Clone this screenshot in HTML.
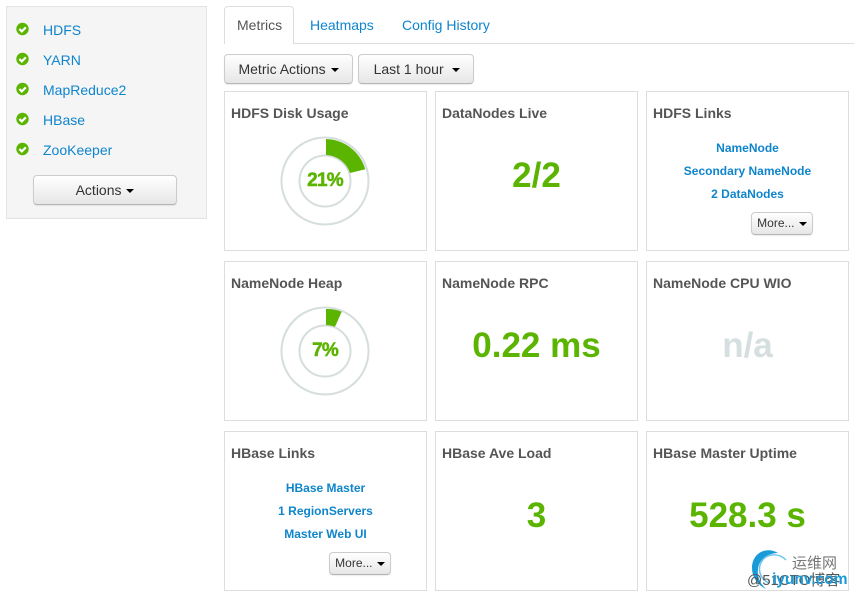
<!DOCTYPE html>
<html><head><meta charset="utf-8">
<style>
html,body{margin:0;padding:0;background:#fff}
body{width:854px;height:597px;overflow:hidden;position:relative;font-family:"Liberation Sans","Noto Sans CJK SC",sans-serif;font-size:14px;color:#333}
.a{position:absolute;white-space:nowrap}
#side{left:6px;top:6px;width:199px;height:211px;background:#f5f5f5;border:1px solid #e3e3e3}
.svc{color:#0f85cc;font-size:14px;left:43px;line-height:20px}
.btn{position:absolute;box-sizing:border-box;border:1px solid #ccc;border-radius:4px;background:linear-gradient(#fff,#e6e6e6);color:#333;font-size:14px;line-height:28px;text-align:center;white-space:nowrap;box-shadow:0 1px 1px rgba(0,0,0,.08);border-bottom-color:#b5b5b5}
.c{display:inline-block;width:0;height:0;border-left:4px solid transparent;border-right:4px solid transparent;border-top:4px solid #000;vertical-align:middle;margin-left:1px}
.card{position:absolute;box-sizing:border-box;width:203px;height:160px;border:1px solid #ddd;background:#fff}
.t{position:absolute;left:6px;top:13px;font-weight:bold;font-size:14px;color:#555;white-space:nowrap}
.v{position:absolute;left:0;right:0;top:62px;text-align:center;font-weight:bold;font-size:35px;line-height:44px;color:#5ab400}
.l{position:absolute;left:0;right:0;text-align:center;font-weight:bold;font-size:12px;line-height:16px;color:#0f85cc;white-space:nowrap}
.m{position:absolute;width:62px;height:23px;left:calc(100% - 97px);top:120px;font-size:12px;line-height:20px;box-sizing:border-box}
.tab{font-size:14px;line-height:20px;color:#0f85cc}
.p{font-family:"Liberation Sans",sans-serif;font-weight:bold;font-size:19px;letter-spacing:-.8px;fill:#5ab400;stroke:#5ab400;stroke-width:.5px}
.r{fill:#fff;stroke:#d5dddd;stroke-width:2px}
</style></head><body>
<div class="a" id="side"></div>
<svg class="a" style="left:16px;top:22px" width="14" height="134" viewBox="0 0 14 134">
<g><circle cx="6.5" cy="7" r="6.2" fill="#5ab400"/><path d="M3.4 7l2.400 2.400 4-4" fill="none" stroke="#fff" stroke-width="2.200"/></g>
<g transform="translate(0,30)"><circle cx="6.5" cy="7" r="6.2" fill="#5ab400"/><path d="M3.4 7l2.400 2.400 4-4" fill="none" stroke="#fff" stroke-width="2.200"/></g>
<g transform="translate(0,60)"><circle cx="6.5" cy="7" r="6.2" fill="#5ab400"/><path d="M3.4 7l2.400 2.400 4-4" fill="none" stroke="#fff" stroke-width="2.200"/></g>
<g transform="translate(0,90)"><circle cx="6.5" cy="7" r="6.2" fill="#5ab400"/><path d="M3.4 7l2.400 2.400 4-4" fill="none" stroke="#fff" stroke-width="2.200"/></g>
<g transform="translate(0,120)"><circle cx="6.5" cy="7" r="6.2" fill="#5ab400"/><path d="M3.4 7l2.400 2.400 4-4" fill="none" stroke="#fff" stroke-width="2.200"/></g>
</svg>
<div class="a svc" style="top:20px">HDFS</div>
<div class="a svc" style="top:50px">YARN</div>
<div class="a svc" style="top:80px">MapReduce2</div>
<div class="a svc" style="top:110px">HBase</div>
<div class="a svc" style="top:140px">ZooKeeper</div>
<div class="btn" style="left:33px;top:175px;width:144px;height:30px">Actions <span class="c"></span></div>

<div class="a" style="left:224px;top:43px;width:630px;height:1px;background:#ddd"></div>
<div class="a" style="left:224px;top:6px;width:70px;height:38px;box-sizing:border-box;border:1px solid #ddd;border-bottom:0;background:#fff;border-radius:4px 4px 0 0"></div>
<div class="a tab" style="left:237px;top:15px;color:#555">Metrics</div>
<div class="a tab" style="left:310px;top:15px">Heatmaps</div>
<div class="a tab" style="left:402px;top:15px">Config History</div>
<div class="btn" style="left:224px;top:54px;width:129px;height:30px">Metric Actions <span class="c"></span></div>
<div class="btn" style="left:358px;top:54px;width:116px;height:30px;padding-left:2px">Last 1 hour &nbsp;<span class="c"></span></div>

<div class="card" style="left:224px;top:91px"><div class="t">HDFS Disk Usage</div>
<svg class="a" style="left:0;top:0" width="201" height="158"><circle class="r" cx="100" cy="89" r="43.5"/><circle class="r" cx="100" cy="89" r="25.5"/><path d="M101 47A42 42 0 0 1 140.300 77.300L125 81A26 26 0 0 0 101 63Z" fill="#5ab400"/>
<text class="p" x="100" y="94" text-anchor="middle">21%</text></svg></div>
<div class="card" style="left:435px;top:91px"><div class="t">DataNodes Live</div><div class="v">2/2</div></div>
<div class="card" style="left:646px;top:91px"><div class="t">HDFS Links</div>
<div class="l" style="top:48px">NameNode</div><div class="l" style="top:71px">Secondary NameNode</div><div class="l" style="top:94px">2 DataNodes</div>
<div class="btn m">More... <span class="c"></span></div></div>

<div class="card" style="left:224px;top:261px"><div class="t">NameNode Heap</div>
<svg class="a" style="left:0;top:0" width="201" height="158"><circle class="r" cx="100" cy="89" r="43.5"/><circle class="r" cx="100" cy="89" r="25.5"/><path d="M101 47A42 42 0 0 1 116.700 49.700L110 64.700A26 26 0 0 0 101 63Z" fill="#5ab400"/>
<text class="p" x="100" y="94" text-anchor="middle">7%</text></svg></div>
<div class="card" style="left:435px;top:261px"><div class="t">NameNode RPC</div><div class="v">0.22 ms</div></div>
<div class="card" style="left:646px;top:261px"><div class="t">NameNode CPU WIO</div><div class="v" style="color:#d5dfe0">n/a</div></div>

<div class="card" style="left:224px;top:431px"><div class="t">HBase Links</div>
<div class="l" style="top:48px">HBase Master</div><div class="l" style="top:71px">1 RegionServers</div><div class="l" style="top:94px">Master Web UI</div>
<div class="btn m">More... <span class="c"></span></div></div>
<div class="card" style="left:435px;top:431px"><div class="t">HBase Ave Load</div><div class="v">3</div></div>
<div class="card" style="left:646px;top:431px"><div class="t">HBase Master Uptime</div><div class="v">528.3 s</div></div>

<svg class="a" style="left:748px;top:547px" width="46" height="46" viewBox="0 0 46 46"><path d="M30 6C18-1 4 6 4 21c0 10 6 17 14 21-6-6-9-12-8-20 1-10 10-16 20-16Z" fill="#1a9ad6"/><path d="M38 13C30 5 16 6 12 18c-2 8 2 15 9 18" fill="none" stroke="#6cc4ea" stroke-width="1.500"/></svg>
<div class="a" style="left:792px;top:555px;font-size:15px;line-height:17px;color:#777">运维网</div>
<div class="a" style="left:747px;top:572px;font-size:15px;line-height:17px;color:#555">@51CTO博客</div>
<div class="a" style="left:772px;top:571px;font-size:15.500px;line-height:18px;font-weight:bold;color:#1a9ad6">iyunv.com</div>
</body></html>
